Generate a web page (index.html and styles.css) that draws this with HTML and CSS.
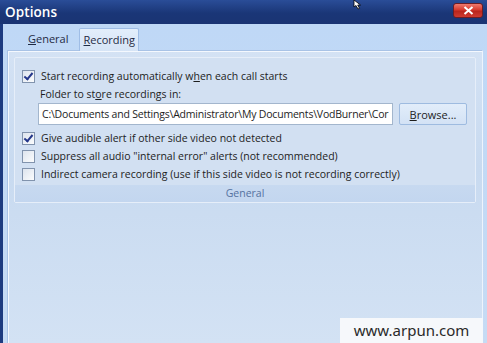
FILE: index.html
```html
<!DOCTYPE html>
<html>
<head>
<meta charset="utf-8">
<link rel="stylesheet" href="styles.css">
</head>
<body>
<div class="window">
  <div class="titlebar">
    <span class="title">Options</span>
    <button class="close" aria-label="Close">
      <svg width="11" height="9" viewBox="0 0 11 9"><path d="M1.5 1 L9.5 8 M9.5 1 L1.5 8" stroke="#fff" stroke-width="2" fill="none"/></svg>
    </button>
  </div>
  <div class="body">
    <div class="tabs">
      <span class="tab"><u>G</u>eneral</span>
      <span class="tab active"><u>R</u>ecording</span>
    </div>
    <div class="panel">
      <div class="group">
        <div class="group-content">
          <label class="row"><span class="cb checked"></span><span>Start recording automatically w<u>h</u>en each call starts</span></label>
          <div class="indent">Folder to st<u>o</u>re recordings in:</div>
          <div class="folder">
            <div class="input">C:\Documents and Settings\Administrator\My Documents\VodBurner\Cor</div>
            <button class="btn"><u>B</u>rowse...</button>
          </div>
          <label class="row"><span class="cb checked"></span><span>Give audible alert if other side video not detected</span></label>
          <label class="row"><span class="cb"></span><span>Suppress all audio "internal error" alerts (not recommended)</span></label>
          <label class="row"><span class="cb"></span><span>Indirect camera recording (use if this side video is not recording correctly)</span></label>
        </div>
        <div class="caption">General</div>
      </div>
    </div>
  </div>
  <div class="watermark">www.arpun.com</div>
  <svg class="cursor" width="12" height="10" viewBox="0 0 12 10"><path d="M1 0 L1 7 L3 5.5 L5 9 L6.5 8.3 L4.7 5 L7.5 5 Z" fill="#fff" stroke="#000" stroke-width="0.8"/></svg>
</div>
</body>
</html>
```

FILE: styles.css
```css
html, body {
  margin: 0;
  padding: 0;
}
body {
  width: 487px;
  height: 343px;
  overflow: hidden;
  font-family: "Open Sans", "DejaVu Sans", sans-serif;
  font-size: 10.5px;
  color: #1d1d1d;
}
.window {
  position: relative;
  width: 487px;
  height: 343px;
  display: flex;
  flex-direction: column;
  background: #1d3b80;
}
.titlebar {
  height: 24px;
  flex: none;
  display: flex;
  align-items: center;
  justify-content: space-between;
  padding: 0 4px 0 5px;
  background: linear-gradient(to bottom, #2a4d98 0%, #1a3677 55%, #1a3473 100%);
}
.title {
  color: #fff;
  font-family: "Open Sans", sans-serif;
  font-size: 13.5px;
  font-weight: 600;
  letter-spacing: 0.1px;
}
.close {
  width: 30px;
  height: 15px;
  margin-top: -4px;
  border: 1px solid #6e1d24;
  border-radius: 3px;
  padding: 0;
  display: flex;
  align-items: center;
  justify-content: center;
  background: linear-gradient(to bottom, #f07a6e 0%, #d73a2e 45%, #b8261d 55%, #cf3a30 100%);
}
.body {
  flex: 1;
  margin-left: 3px;
  display: flex;
  flex-direction: column;
  background: linear-gradient(to bottom, #bfd8f6 0%, #c6dbf4 100%);
  padding-right: 4px;
}
.tabs {
  height: 26px;
  flex: none;
  display: flex;
  align-items: flex-end;
  padding-left: 23px;
  gap: 8px;
}
.tab {
  font-size: 11px;
  color: #1f2b44;
  padding: 0 3px 4px 2px;
  line-height: 15px;
}
.tab.active {
  padding: 3px 3px 4px 3px;
  margin-bottom: -1px;
  border: 1px solid #9fbde6;
  border-bottom: none;
  border-radius: 2px 2px 0 0;
  background: linear-gradient(to bottom, #e3eefb, #d6e4f6);
  position: relative;
  z-index: 1;
}
.panel {
  flex: 1;
  margin-left: 4px;
  border: 1px solid #a9c3e6;
  border-right-color: #eef4fc;
  border-bottom: none;
  box-shadow: inset 1px 1px 0 #f4f8fe;
  background: linear-gradient(to bottom, #d4e2f4 0%, #c8daf0 40%, #d3e2f4 100%);
  padding: 6px 6px 0 6px;
}
.group {
  border: 1px solid #e6eef9;
  border-radius: 2px;
  background: #d2e0f2;
  display: flex;
  flex-direction: column;
}
.group-content {
  padding: 9px 8px 2px 7px;
  display: flex;
  flex-direction: column;
}
.row {
  display: flex;
  align-items: center;
  height: 18px;
  gap: 6px;
}
.cb {
  width: 11px;
  height: 11px;
  border: 1px solid #8193ad;
  background: linear-gradient(to bottom right, #dde4ee, #fbfcfd);
  flex: none;
  position: relative;
}
.cb.checked::after {
  content: "";
  position: absolute;
  left: 3px;
  top: 0px;
  width: 3px;
  height: 7px;
  border: solid #24378a;
  border-width: 0 2px 2px 0;
  transform: rotate(40deg);
}
.indent {
  padding-left: 18px;
  height: 18px;
  line-height: 18px;
}
.folder {
  display: flex;
  align-items: center;
  gap: 6px;
  padding-left: 16px;
  margin: 0 0 4px;
}
.input {
  width: 350px;
  height: 20px;
  line-height: 20px;
  padding-left: 3px;
  border: 1px solid #a3b6cd;
  background: #fff;
  white-space: nowrap;
  overflow: hidden;
  letter-spacing: -0.2px;
}
.btn {
  width: 68px;
  height: 22px;
  padding: 0;
  font-family: inherit;
  font-size: 11px;
  color: #1d1d1d;
  border: 1px solid #9ebbe0;
  border-radius: 2px;
  background: linear-gradient(to bottom, #e2edfa, #d3e2f5);
}
.caption {
  height: 17px;
  line-height: 17px;
  text-align: center;
  color: #55729f;
  background: linear-gradient(to bottom, #c7d9f0, #c3d6ef);
}
.watermark {
  position: absolute;
  right: 4px;
  bottom: 0;
  width: 143px;
  height: 25px;
  line-height: 25px;
  text-align: center;
  background: #f6f8fb;
  color: #2a2a2a;
  font-family: "Noto Sans", sans-serif;
  font-size: 15px;
}
.cursor {
  position: absolute;
  left: 353px;
  top: 0;
}
u { text-decoration: underline; text-underline-offset: 1px; }
```
